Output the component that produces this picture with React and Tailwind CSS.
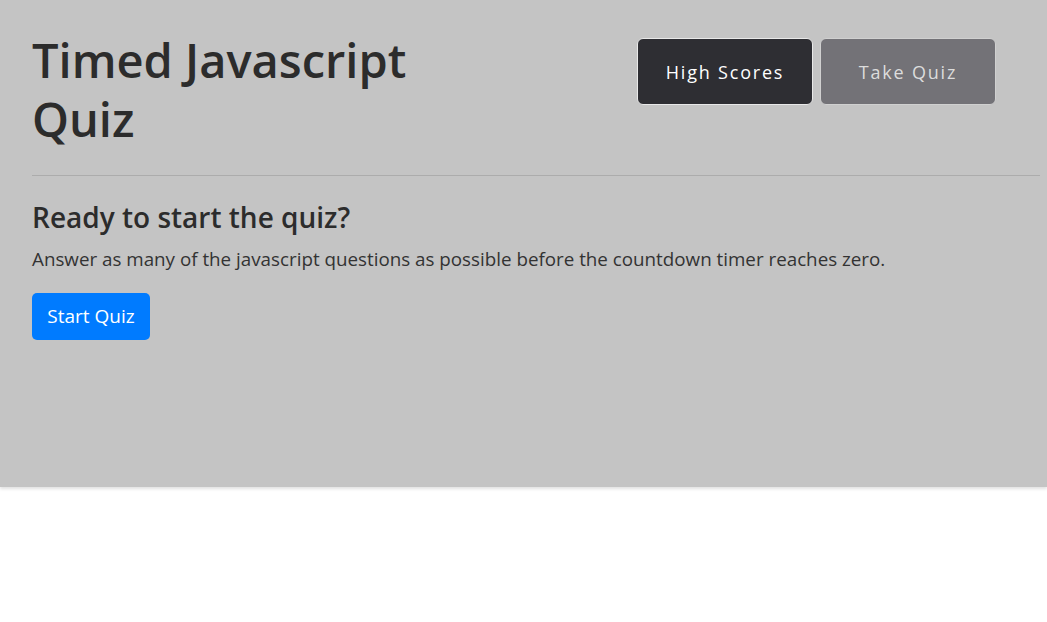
export default function App() {
  return (
    <div className="min-h-[622px] bg-white font-['Open_Sans',sans-serif]">
      <div className="h-[487px] bg-[#c4c4c4] pl-8 pr-[7px] pt-[30px] text-[#2c2c2c] shadow-[0_2px_3px_rgba(0,0,0,0.12)]">
        <header className="flex items-start">
          <h1 className="w-[420px] pt-[1px] text-[47px] font-semibold leading-[59px]">
            Timed Javascript Quiz
          </h1>
          <nav className="ml-[185px] mt-[8px] flex gap-[7px]">
            <button className="h-[67px] w-[176px] rounded-[6px] border border-[#e8e8e8] bg-[#2e2e33] pt-[1px] text-[18px] tracking-[0.1em] text-white">
              High Scores
            </button>
            <button className="h-[67px] w-[176px] rounded-[6px] border border-[#d0d0d0] bg-[#737277] pt-[1px] text-[18px] tracking-[0.1em] text-[#dcdcdc]">
              Take Quiz
            </button>
          </nav>
        </header>
        <hr className="mt-[26px] border-t border-[#acacac]" />
        <section className="pt-[24px]">
          <h4 className="text-[28px] font-semibold leading-[34px]">Ready to start the quiz?</h4>
          <p className="mt-[10px] text-[18.8px] leading-[30px] text-[#333]">
            Answer as many of the javascript questions as possible before the countdown timer reaches zero.
          </p>
          <button className="mt-[19px] h-[47px] w-[118px] rounded-[5px] bg-[#007bff] text-[19px] text-white">
            Start Quiz
          </button>
        </section>
      </div>
    </div>
  );
}
